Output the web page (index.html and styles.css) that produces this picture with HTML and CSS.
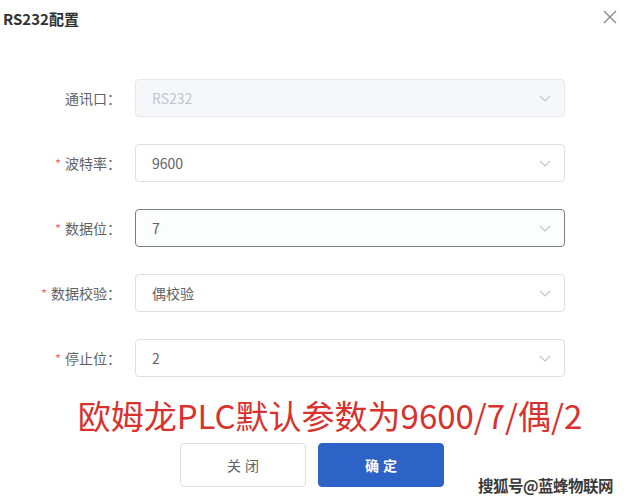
FILE: index.html
```html
<!DOCTYPE html>
<html lang="zh">
<head>
<meta charset="utf-8">
<link rel="stylesheet" href="styles.css">
</head>
<body>
<div class="dialog">
  <div class="header">
    <span class="title">RS232配置</span>
    <svg class="close" width="14" height="14" viewBox="0 0 14 14"><path d="M1 1L13 13M13 1L1 13" stroke="#8a8a8a" stroke-width="1.4" fill="none"/></svg>
  </div>
  <div class="form">
    <div class="row">
      <div class="label">通讯口：</div>
      <div class="select disabled"><span class="value">RS232</span><svg class="chev" width="12" height="7" viewBox="0 0 12 7"><path d="M1 1L6 6L11 1" stroke="#c0c4cc" stroke-width="1.1" fill="none"/></svg></div>
    </div>
    <div class="row">
      <div class="label"><span class="req">*</span>波特率：</div>
      <div class="select"><span class="value">9600</span><svg class="chev" width="12" height="7" viewBox="0 0 12 7"><path d="M1 1L6 6L11 1" stroke="#c0c4cc" stroke-width="1.1" fill="none"/></svg></div>
    </div>
    <div class="row">
      <div class="label"><span class="req">*</span>数据位：</div>
      <div class="select focus"><span class="value">7</span><svg class="chev" width="12" height="7" viewBox="0 0 12 7"><path d="M1 1L6 6L11 1" stroke="#c0c4cc" stroke-width="1.1" fill="none"/></svg></div>
    </div>
    <div class="row">
      <div class="label"><span class="req">*</span>数据校验：</div>
      <div class="select"><span class="value">偶校验</span><svg class="chev" width="12" height="7" viewBox="0 0 12 7"><path d="M1 1L6 6L11 1" stroke="#c0c4cc" stroke-width="1.1" fill="none"/></svg></div>
    </div>
    <div class="row">
      <div class="label"><span class="req">*</span>停止位：</div>
      <div class="select"><span class="value">2</span><svg class="chev" width="12" height="7" viewBox="0 0 12 7"><path d="M1 1L6 6L11 1" stroke="#c0c4cc" stroke-width="1.1" fill="none"/></svg></div>
    </div>
  </div>
  <div class="note">欧姆龙PLC默认参数为9600/7/偶/2</div>
  <div class="footer">
    <button class="btn">关闭</button>
    <button class="btn primary">确定</button>
  </div>
  <div class="watermark">搜狐号@蓝蜂物联网</div>
</div>
</body>
</html>
```

FILE: styles.css
```css
html, body {
  margin: 0;
  padding: 0;
  background: #ffffff;
}
body {
  font-family: "Noto Sans CJK SC", "Noto Sans", sans-serif;
  color: #606266;
}
.dialog {
  position: relative;
  width: 630px;
  height: 500px;
  overflow: hidden;
}
.header {
  display: flex;
  justify-content: space-between;
  align-items: flex-start;
  padding: 8px 13px 0 3px;
  height: 71px;
  box-sizing: border-box;
}
.title {
  font-size: 15px;
  font-weight: bold;
  color: #303133;
  line-height: 22px;
}
.close {
  margin-top: 2px;
}
.form {
  display: flex;
  flex-direction: column;
  gap: 27px;
  padding-top: 8px;
}
.row {
  display: flex;
  align-items: center;
  height: 38px;
}
.label {
  width: 121px;
  text-align: right;
  font-size: 14px;
  color: #606266;
  margin-right: 14px;
  white-space: nowrap;
}
.req {
  color: #f56c6c;
  margin-right: 4px;
  font-size: 13px;
}
.select {
  width: 430px;
  height: 38px;
  box-sizing: border-box;
  border: 1px solid #dcdfe6;
  border-radius: 4px;
  display: flex;
  align-items: center;
  justify-content: space-between;
  padding: 0 13px 0 16px;
  background: #fff;
}
.select.disabled {
  background: #f5f7fa;
  border-color: #e4e7ed;
}
.select.disabled .value {
  color: #c0c4cc;
}
.select.focus {
  border-color: #7a7d82;
  background: #fcfdfd;
}
.value {
  font-size: 14px;
  color: #606266;
}
.note {
  margin-top: 16px;
  padding-left: 30px;
  text-align: center;
  font-size: 33px;
  line-height: 44px;
  color: #d8312e;
  white-space: nowrap;
}
.footer {
  display: flex;
  gap: 12px;
  padding-left: 180px;
  margin-top: 6px;
}
.btn {
  width: 126px;
  height: 44px;
  border: 1px solid #dcdfe6;
  background: #fff;
  border-radius: 4px;
  font-family: "Noto Sans CJK SC", sans-serif;
  font-size: 14px;
  color: #606266;
  letter-spacing: 4px;
  padding: 0 0 0 4px;
}
.btn.primary {
  background: #2d62c6;
  border-color: #2d62c6;
  color: #ffffff;
  font-weight: bold;
}
.watermark {
  position: absolute;
  left: 478px;
  top: 475px;
  font-size: 15.5px;
  font-weight: bold;
  color: #3a3a3a;
  line-height: 20px;
  letter-spacing: -0.5px;
  text-shadow: 1px 0 #fff, -1px 0 #fff, 0 1px #fff, 0 -1px #fff;
}
```
